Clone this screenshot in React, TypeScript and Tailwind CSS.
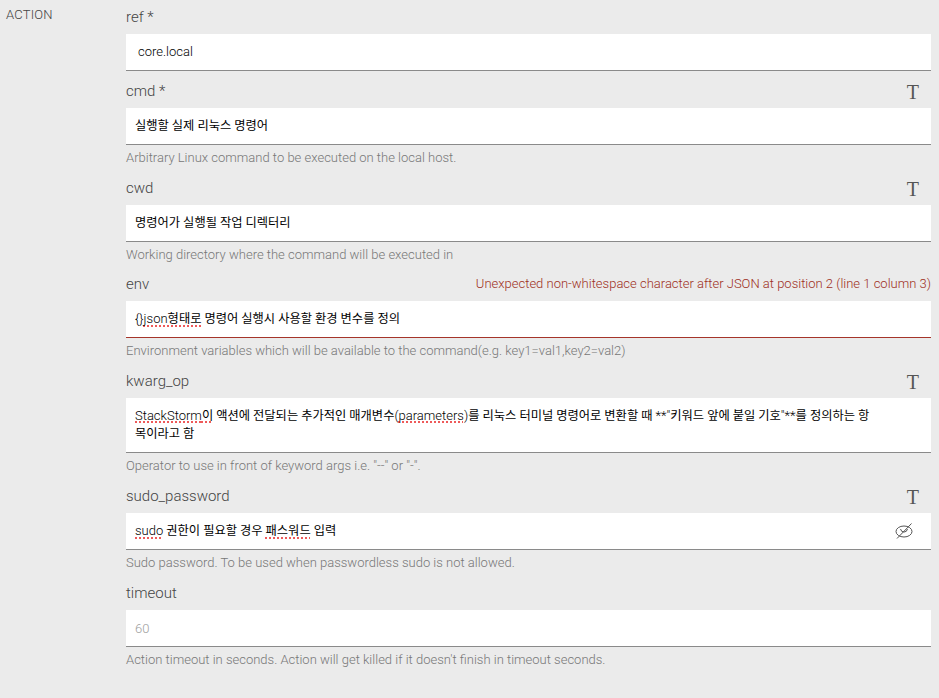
const Squiggle = ({ children }: { children: React.ReactNode }) => (
  <span className="underline decoration-dotted decoration-[#ee5a5a] decoration-[1.5px] underline-offset-[2px] [text-decoration-skip-ink:none]">
    {children}
  </span>
);

const Lat = ({ children }: { children: React.ReactNode }) => <span className="text-[13px] font-light">{children}</span>;

interface FieldProps {
  label: string;
  help?: string;
  error?: string;
  typed?: boolean;
  children: React.ReactNode;
  tall?: boolean;
  trailing?: React.ReactNode;
}

const Field = ({ label, help, error, typed, children, tall, trailing }: FieldProps) => (
  <div>
    <div className="h-[37px] flex items-end justify-between pb-[7px] pr-[12px]">
      <span className="text-[15px] leading-[20px] font-light text-[#444]">{label}</span>
      {error && <span className="text-[13px] leading-[20px] font-light text-[#9e2f22] -mr-[12px]">{error}</span>}
      {typed && <span className="text-[20px] leading-[20px] text-[#555] font-['Liberation_Serif',serif] -mb-[1px]">T</span>}
    </div>
    <div
      className={`bg-white border-b flex items-start justify-between pl-[9px] pr-[17px] pt-[9px] ${
        error ? 'border-[#a5352a]' : 'border-[#8a8a8a]'
      } ${tall ? 'h-[55px]' : 'h-[37px]'}`}
    >
      {children}
      {trailing}
    </div>
    {help && (
      <div className={`pt-[5px] text-[13px] leading-[16px] font-light text-[#777] ${tall ? 'h-[23.33px]' : 'h-[22.67px]'}`}>
        {help}
      </div>
    )}
  </div>
);

const Korean = ({ children }: { children: React.ReactNode }) => (
  <div className="text-[12.25px] leading-[18px] text-black font-['Roboto','Noto_Sans_CJK_KR',sans-serif] w-[745px]">
    {children}
  </div>
);

const EyeOff = () => (
  <svg width="20" height="18" viewBox="0 0 20 18" fill="none" stroke="#555" strokeWidth="1">
    <ellipse cx="10" cy="9.500" rx="8" ry="5.500" />
    <path d="M6.500 7a3.600 4 0 0 0 7 0" />
    <path d="M3 16.500 17.500 1.500" />
  </svg>
);

export default function App() {
  return (
    <div className="min-h-[698px] bg-[#ebebeb] flex font-['Roboto',sans-serif]">
      <div className="w-[126px] shrink-0 pl-[6px] pt-[8px] text-[13px] leading-[14px] tracking-[0.2px] font-light text-[#444]">
        ACTION
      </div>
      <div className="flex-1 pr-[8px] -mt-[3px]">
        <Field label="ref *">
          <div className="pl-[3px] text-[13px] leading-[18px] font-light text-black">core.local</div>
        </Field>
        <Field label="cmd *" typed help="Arbitrary Linux command to be executed on the local host.">
          <Korean>실행할 실제 리눅스 명령어</Korean>
        </Field>
        <Field label="cwd" typed help="Working directory where the command will be executed in">
          <Korean>명령어가 실행될 작업 디렉터리</Korean>
        </Field>
        <Field
          label="env"
          error="Unexpected non-whitespace character after JSON at position 2 (line 1 column 3)"
          help="Environment variables which will be available to the command(e.g. key1=val1,key2=val2)"
        >
          <Korean>
            <Lat>{'{}'}</Lat>
            <Squiggle>
              <Lat>json</Lat>형태로
            </Squiggle>{' '}
            명령어 실행시 사용할 환경 변수를 정의
          </Korean>
        </Field>
        <Field label="kwarg_op" typed tall help={'Operator to use in front of keyword args i.e. "--" or "-".'}>
          <Korean>
            <Squiggle>
              <Lat>StackStorm</Lat>이
            </Squiggle>{' '}
            액션에 전달되는 추가적인 매개변수<Lat>(</Lat>
            <Squiggle>
              <Lat>parameters</Lat>
            </Squiggle>
            <Lat>)</Lat>를 리눅스 터미널 명령어로 변환할 때 <Lat>**"</Lat>키워드 앞에 붙일 기호<Lat>"**</Lat>를 정의하는 항목이라고 함
          </Korean>
        </Field>
        <Field
          label="sudo_password"
          typed
          help="Sudo password. To be used when passwordless sudo is not allowed."
          trailing={<EyeOff />}
        >
          <Korean>
            <Squiggle>
              <Lat>sudo</Lat>
            </Squiggle>{' '}
            권한이 필요할 경우 <Squiggle>패스워드</Squiggle> 입력
          </Korean>
        </Field>
        <Field label="timeout" help="Action timeout in seconds. Action will get killed if it doesn't finish in timeout seconds.">
          <div className="mt-[1px] text-[13px] leading-[18px] font-light text-[#a0a0a0]">60</div>
        </Field>
      </div>
    </div>
  );
}
